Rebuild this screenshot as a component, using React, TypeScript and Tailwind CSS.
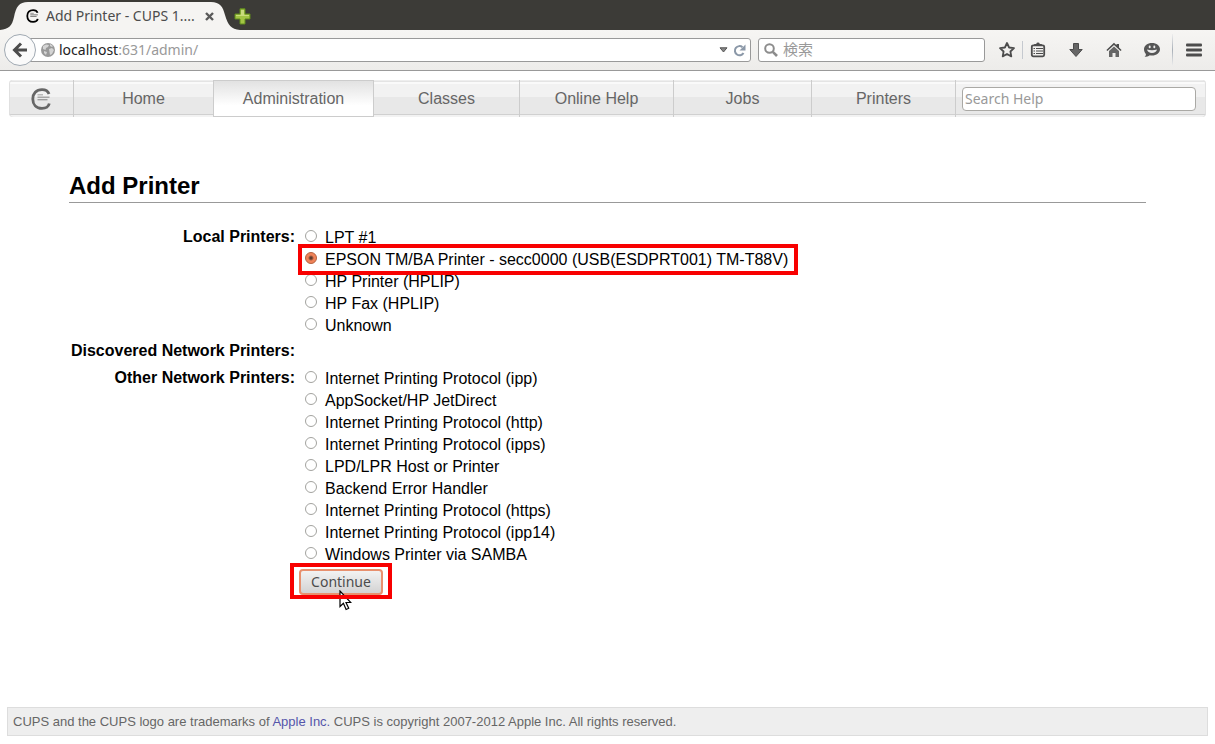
import React from "react";

const localPrinters = [
  "LPT #1",
  "EPSON TM/BA Printer - secc0000 (USB(ESDPRT001) TM-T88V)",
  "HP Printer (HPLIP)",
  "HP Fax (HPLIP)",
  "Unknown",
];
const otherPrinters = [
  "Internet Printing Protocol (ipp)",
  "AppSocket/HP JetDirect",
  "Internet Printing Protocol (http)",
  "Internet Printing Protocol (ipps)",
  "LPD/LPR Host or Printer",
  "Backend Error Handler",
  "Internet Printing Protocol (https)",
  "Internet Printing Protocol (ipp14)",
  "Windows Printer via SAMBA",
];
const sections = ["Home", "Administration", "Classes", "Online Help", "Jobs", "Printers"];

function CupsLogo({ className }: { className: string }) {
  return (
    <svg viewBox="0 0 20 22" className={className} fill="none" stroke="currentColor" aria-hidden="true">
      <path d="M18 6C17 3 14.500 1.600 11 1.600C5.200 1.600 1.800 5.600 1.800 11S5.200 20.400 11 20.400C14.800 20.400 17.400 19 18.300 15.500" strokeWidth="2.800" />
      <path d="M6.500 6.800h5.500" strokeWidth="1.200" opacity=".5" />
      <path d="M6.500 9.200h12" strokeWidth="1.300" opacity=".6" />
      <path d="M6.500 11.700h10" strokeWidth="1.300" opacity=".6" />
    </svg>
  );
}

function Star() {
  return (
    <svg width="18" height="18" viewBox="0 0 18 18" fill="none" stroke="#4c4c4c" strokeWidth="1.8" strokeLinejoin="round">
      <path d="M9 2l2.100 4.500 4.900.6-3.600 3.400.9 4.900L9 13l-4.300 2.400.9-4.900L2 7.100l4.900-.6z" />
    </svg>
  );
}
function Clipboard() {
  return (
    <svg width="16" height="16" viewBox="0 0 16 16" fill="none" stroke="#4c4c4c">
      <rect x="1.800" y="3.300" width="12.400" height="11" rx="1.500" strokeWidth="1.800" />
      <path d="M4 4V2.500Q4 2 5 2h1.200Q6.500.6 8 .6T9.800 2H11q1 0 1 .5V4z" fill="#4c4c4c" stroke="none" />
      <path d="M3.500 6.500h1.500M6 6.500h7M3.500 9h1.500M6 9h7M3.500 11.500h1.500M6 11.500h7" strokeWidth="1.200" />
    </svg>
  );
}
function Download() {
  return (
    <svg width="16" height="16" viewBox="0 0 16 16" fill="#666" stroke="#4c4c4c">
      <path d="M5.500 1.500h5v6h3.700L8 14.500 1.800 7.500h3.700z" />
    </svg>
  );
}
function House() {
  return (
    <svg width="16" height="16" viewBox="0 0 16 16" fill="#4c4c4c">
      <path d="M8 .8l2.500 2.400V2H13v3.600L15.600 8l-1 1L8 3 1.400 9l-1-1z" />
      <path d="M8 4.500l5 4.500v6H9.500v-4h-3v4H3V9z" fill="#666" />
    </svg>
  );
}
function Chat() {
  return (
    <svg width="18" height="16" viewBox="0 0 18 16">
      <path d="M9 1c4.500 0 8 2.600 8 6.200s-3.500 6.300-8 6.300c-.8 0-1.500 0-2.200-.2C5.500 14.500 3.500 15 1.500 15c1-.8 1.400-1.900 1.400-3.100C1.700 10.700 1 9.100 1 7.200 1 3.600 4.500 1 9 1z" fill="#565656" />
      <path d="M4 7.500q5 1.600 10 0-.8 3.400-5 3.400t-5-3.400z" fill="#ededed" />
      <ellipse cx="6.700" cy="4.900" rx="1" ry="1.300" fill="#ededed" />
      <ellipse cx="11.300" cy="4.900" rx="1" ry="1.300" fill="#ededed" />
    </svg>
  );
}
function Menu() {
  return (
    <svg width="16" height="14" viewBox="0 0 16 14" fill="#4c4c4c">
      <rect width="16" height="3" rx="1" y=".5" />
      <rect width="16" height="3" rx="1" y="5.500" />
      <rect width="16" height="3" rx="1" y="10.500" />
    </svg>
  );
}

function Browser() {
  return (
    <header className="font-['Noto_Sans','Noto_Sans_CJK_JP',sans-serif] text-sm">
      <div className="flex h-[30px] items-start bg-[#3c3b37]">
        <div className="relative flex h-[30px] w-[232px] shrink-0 items-center pt-[2px] pl-[26px] text-[#4c4c4c]">
          <svg className="absolute inset-0" width="240" height="30" viewBox="0 0 240 30" aria-hidden="true">
            <path d="M0 30C9 29 12 26 14 17C16 7 19 2 28 2H211C220 2 223 7 225 15C228 25 231 29 240 30Z" fill="#f5f4f2" />
          </svg>
          <CupsLogo className="relative h-[14px] w-[13px] text-black" />
          <span className="relative ml-[7px] w-[152px] whitespace-nowrap">Add Printer - CUPS 1....</span>
          <button aria-label="Close tab" className="relative ml-[7px]">
            <svg width="9" height="9" viewBox="0 0 9 9" stroke="#5a5a5a" strokeWidth="2.400"><path d="M1 1l7 7M8 1L1 8" /></svg>
          </button>
        </div>
        <button aria-label="New tab" className="relative ml-[2px] pt-[8px]">
          <svg width="17" height="17" viewBox="0 0 17 17" fill="#a3c544" stroke="#5f8a1c" strokeWidth="1">
            <path d="M6 .8h5V6h5v5h-5v5H6v-5H1V6h5z" />
            <path d="M7 2h3v5h5v1H2V7h5z" fill="#c9dc7c" stroke="none" />
          </svg>
        </button>
      </div>
      <div className="flex h-[41px] items-center border-b border-[#999] bg-linear-to-b from-[#f6f5f3] to-[#edecea] pr-[13px]">
        <button aria-label="Back" className="relative z-10 ml-1 flex size-8 shrink-0 items-center justify-center rounded-full border border-[#a0a9b2] bg-[#fafafa]">
          <svg width="16" height="16" viewBox="0 0 16 16" fill="none" stroke="#4c4c4c" strokeWidth="3"><path d="M9 1.500L2.500 8 9 14.500M3 8h12" /></svg>
        </button>
        <div className="-ml-3 flex h-6 flex-1 items-center rounded-r-[3px] border border-[#999] bg-white pl-[16px] pr-1">
          <svg width="14" height="14" viewBox="0 0 14 14" aria-hidden="true">
            <circle cx="7" cy="7" r="7" fill="#999" />
            <path d="M2 3l3-1.500 3 .5-1 2-2 1-.5 2L2 6zM8 6l3-1 2 2-2 4-2 1-.5-3zM3 8l3 1-1 3-2-2zM9 1l3 2-1 1-2-1z" fill="#d4d4d4" />
          </svg>
          <input aria-label="Address" className="sr-only" defaultValue="http://localhost:631/admin/" />
          <span className="ml-1 flex-1 text-[#999]"><span className="text-[#222]">localhost</span>:631/admin/</span>
          <svg width="9" height="6" viewBox="0 0 9 6" fill="#888" stroke="#555"><path d="M1 .8h7L4.500 5z" /></svg>
          <button aria-label="Reload" className="ml-[5px]">
            <svg width="13" height="13" viewBox="0 0 13 13" fill="none" stroke="#8b98a8" strokeWidth="2"><path d="M9.500 3.200A4.600 4.600 0 1 0 10.500 9" /><path d="M12.500 .5v6h-6z" fill="#8b98a8" stroke="none" /></svg>
          </button>
        </div>
        <label className="ml-[7px] flex h-6 w-[227px] shrink-0 items-center rounded-[3px] border border-[#999] bg-white pl-[5px]">
          <svg width="14" height="14" viewBox="0 0 14 14" fill="none" stroke="#8c8c8c"><circle cx="5.500" cy="5.500" r="4.300" strokeWidth="2" /><path d="M8.800 8.800l4.200 4.200" strokeWidth="2.600" /></svg>
          <input aria-label="検索" placeholder="検索" className="ml-[5px] w-[180px] bg-transparent text-[15px] outline-none placeholder:text-[#999]" />
        </label>
        <button aria-label="Bookmark" className="ml-[13px]"><Star /></button>
        <div className="ml-[6px] h-[18px] w-px bg-[#c5c9cf]" />
        <button aria-label="Bookmarks list" className="ml-[7px]"><Clipboard /></button>
        <button aria-label="Downloads" className="ml-[22px]"><Download /></button>
        <button aria-label="Home page" className="ml-[22px]"><House /></button>
        <button aria-label="Chat" className="ml-[21px]"><Chat /></button>
        <div className="ml-[11px] h-8 w-px bg-linear-to-b from-[#eeeeee] via-[#a9b0b8] to-[#eeeeee]" />
        <button aria-label="Menu" className="ml-[13px]"><Menu /></button>
      </div>
    </header>
  );
}

function Option({ name, checked }: { name: string; checked?: boolean }) {
  return (
    <label className="relative flex h-[22px] w-fit items-center whitespace-nowrap">
      <input
        type="radio"
        name="device"
        defaultChecked={checked}
        className="mr-2 mb-1 size-3 appearance-none rounded-full border border-[#a3a39f] bg-white checked:border-[#b5623f] checked:bg-[radial-gradient(circle,#5e3a2c_0_1px,#f08258_3px)]"
      />
      {name}
      {checked && <span className="pointer-events-none absolute -top-[5px] -right-[10px] -bottom-[4px] -left-[7px] z-10 border-4 border-[#f80000]" />}
    </label>
  );
}

export default function App() {
  return (
    <div className="flex min-h-screen flex-col bg-white font-['Liberation_Sans',Arial,sans-serif] text-base text-black">
      <Browser />
      <nav className="mx-[9px] mt-[9px] grid h-[37px] grid-cols-[64fr_140fr_160fr_146fr_154fr_138fr_144fr_251fr] rounded-[4px] bg-[linear-gradient(#eeeeee_0_1px,#e4e4e4_1px_2px,#fafafa_2px_4px,#f2f2f2_4px_17px,#e8e8e8_17px_34px,#d0d0d0_34px_35px,#f2f2f2_35px)] text-[#666] shadow-[inset_1px_0_#e0e0e0,inset_-1px_0_#e0e0e0]">
        <a href="#cups" aria-label="CUPS" className="flex items-center justify-center"><CupsLogo className="h-[22px] w-5" /></a>
        {sections.map((s) => (
          <a
            key={s}
            href={"#" + s}
            className={
              s === "Administration"
                ? "flex items-center justify-center border border-r-0 border-[#ccc] bg-linear-to-b from-[#e2e2e2] to-white to-70%"
                : "flex items-center justify-center border-l border-[#ccc]"
            }
          >
            {s}
          </a>
        ))}
        <div className="flex items-center border-l border-[#ccc] pr-[10px] pl-[6px]">
          <input
            aria-label="Search Help"
            placeholder="Search Help"
            className="h-6 w-full rounded-[4px] border border-[#aaa9a5] bg-white px-[2px] font-['Noto_Sans',sans-serif] text-sm placeholder:text-[#999]"
          />
        </div>
      </nav>
      <main className="px-[69px] pt-[53px]">
        <h2 className="border-b border-[#999] text-2xl leading-8 font-bold">Add Printer</h2>
        <form className="pt-[23px]">
          <table className="border-collapse text-left leading-[22px]">
            <tbody>
              <tr>
                <th scope="row" className="w-[226px] p-0 text-right align-top whitespace-nowrap">Local Printers:</th>
                <td className="p-0 pt-px pl-[10px]">
                  {localPrinters.map((p, i) => <Option key={p} name={p} checked={i === 1} />)}
                </td>
              </tr>
              <tr>
                <th scope="row" className="p-0 pt-[3px] text-right whitespace-nowrap">Discovered Network Printers:</th>
                <td className="p-0" />
              </tr>
              <tr>
                <th scope="row" className="p-0 pt-[5px] text-right align-top whitespace-nowrap">Other Network Printers:</th>
                <td className="p-0 pt-[6px] pl-[10px]">
                  {otherPrinters.map((p) => <Option key={p} name={p} />)}
                </td>
              </tr>
              <tr>
                <td className="p-0" />
                <td className="p-0 pt-[3px] pl-1">
                  <div className="relative w-fit">
                    <button type="button" className="block h-[26px] w-[84px] rounded-[4px] border-2 border-[#e8906e] bg-linear-to-b from-[#f2f2f2] to-[#d3d3d3] font-['Noto_Sans',sans-serif] text-sm leading-5 text-[#4c4c4c]">
                      Continue
                    </button>
                    <svg className="absolute top-[21px] left-[40px]" width="13" height="21" viewBox="0 0 13 21" aria-hidden="true">
                      <path d="M1 1v15.500l3.400-3.200 2.700 6.200 2.600-1.200-2.700-5.800h4.800z" fill="#fff" stroke="#000" strokeWidth="1.200" />
                    </svg>
                    <span className="pointer-events-none absolute -top-[6px] -right-[9px] -bottom-[4px] -left-[9px] border-4 border-[#f80000]" />
                  </div>
                </td>
              </tr>
            </tbody>
          </table>
        </form>
      </main>
      <footer className="mx-[7px] mt-auto mb-2 border border-[#ddd] bg-[#eee] px-[5px] py-1 text-[13px] leading-[19px] text-[#666]">
        CUPS and the CUPS logo are trademarks of <a href="#apple" className="text-[#5555aa]">Apple Inc.</a> CUPS is copyright 2007-2012 Apple Inc. All rights reserved.
      </footer>
    </div>
  );
}
